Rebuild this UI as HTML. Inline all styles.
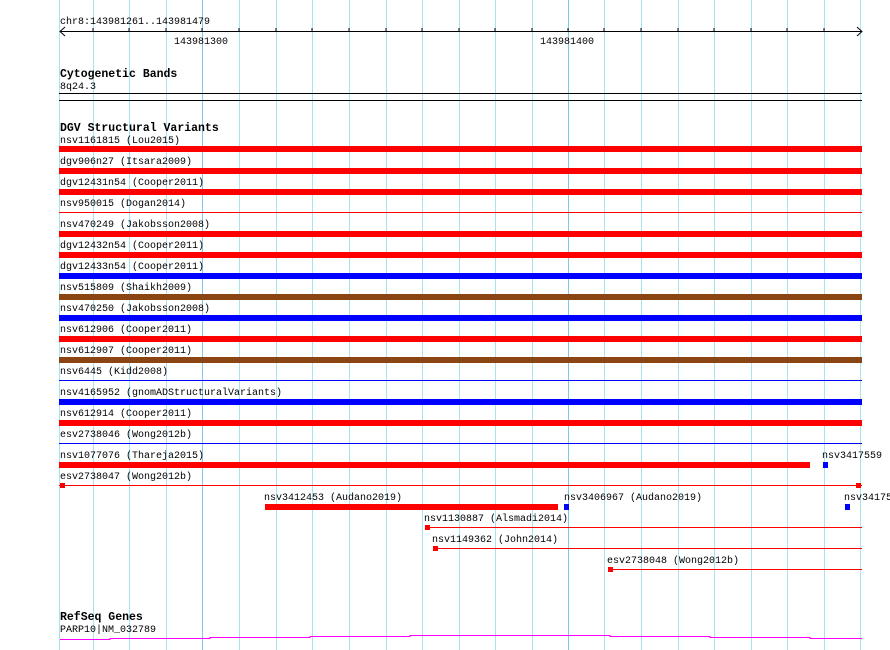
<!DOCTYPE html>
<html><head><meta charset="utf-8"><style>
body{margin:0;width:890px;height:650px;background:#fff;overflow:hidden;position:relative;font-family:"Liberation Mono",monospace;font-size:10px;color:#000}
.g{position:absolute;top:0;height:650px;width:1px;background:#a8e4f0}
.gm{background:#80c8e8}
.t{position:absolute;white-space:nowrap;line-height:12px;margin-top:2px}
.b{position:absolute;font-weight:bold;font-size:11.5px;white-space:nowrap;margin-top:2px}
.r{position:absolute}
</style></head><body>
<div class="g" style="left:59px"></div><div class="g" style="left:93px"></div><div class="g" style="left:129px"></div><div class="g" style="left:166px"></div><div class="g gm" style="left:202px"></div><div class="g" style="left:239px"></div><div class="g" style="left:276px"></div><div class="g" style="left:312px"></div><div class="g" style="left:349px"></div><div class="g" style="left:386px"></div><div class="g" style="left:422px"></div><div class="g" style="left:459px"></div><div class="g" style="left:495px"></div><div class="g" style="left:532px"></div><div class="g gm" style="left:568px"></div><div class="g" style="left:604px"></div><div class="g" style="left:641px"></div><div class="g" style="left:678px"></div><div class="g" style="left:714px"></div><div class="g" style="left:751px"></div><div class="g" style="left:787px"></div><div class="g" style="left:824px"></div><div class="g" style="left:860px"></div>

<div class="t" style="left:60px;top:15px">chr8:143981261..143981479</div>
<div class="r" style="left:60px;top:31px;width:801px;height:1px;background:#000"></div>
<svg class="r" style="left:59px;top:26px" width="804" height="12"><path d="M6 1L1 5.5L6 10M798 1L803 5.5L798 10" stroke="#000" fill="none"/>
<g stroke="#000"><path d="M34 2v4M70 2v4M107 2v4M143 2v4M180 2v4M217 2v4M253 2v4M290 2v4M327 2v4M363 2v4M400 2v4M436 2v4M473 2v4M509 2v4M545 2v4M582 2v4M619 2v4M655 2v4M692 2v4M728 2v4M765 2v4"/></g></svg>
<div class="t" style="left:174px;top:35px">143981300</div>
<div class="t" style="left:540px;top:35px">143981400</div>

<div class="b" style="left:60px;top:66px">Cytogenetic Bands</div>
<div class="t" style="left:60px;top:80px">8q24.3</div>
<div class="r" style="left:59px;top:93px;width:803px;height:1px;background:#000"></div>
<div class="r" style="left:59px;top:100px;width:803px;height:1px;background:#000"></div>

<div class="b" style="left:60px;top:120px">DGV Structural Variants</div>

<div class="t" style="left:60px;top:134px">nsv1161815 (Lou2015)</div><div class="r" style="left:59px;top:146px;width:803px;height:6px;background:#f00"></div>
<div class="t" style="left:60px;top:155px">dgv906n27 (Itsara2009)</div><div class="r" style="left:59px;top:168px;width:803px;height:6px;background:#f00"></div>
<div class="t" style="left:60px;top:176px">dgv12431n54 (Cooper2011)</div><div class="r" style="left:59px;top:189px;width:803px;height:6px;background:#f00"></div>
<div class="t" style="left:60px;top:197px">nsv950015 (Dogan2014)</div><div class="r" style="left:59px;top:212px;width:803px;height:1px;background:#f00"></div>
<div class="t" style="left:60px;top:218px">nsv470249 (Jakobsson2008)</div><div class="r" style="left:59px;top:231px;width:803px;height:6px;background:#f00"></div>
<div class="t" style="left:60px;top:239px">dgv12432n54 (Cooper2011)</div><div class="r" style="left:59px;top:252px;width:803px;height:6px;background:#f00"></div>
<div class="t" style="left:60px;top:260px">dgv12433n54 (Cooper2011)</div><div class="r" style="left:59px;top:273px;width:803px;height:6px;background:#00f"></div>
<div class="t" style="left:60px;top:281px">nsv515809 (Shaikh2009)</div><div class="r" style="left:59px;top:294px;width:803px;height:6px;background:#8b4513"></div>
<div class="t" style="left:60px;top:302px">nsv470250 (Jakobsson2008)</div><div class="r" style="left:59px;top:315px;width:803px;height:6px;background:#00f"></div>
<div class="t" style="left:60px;top:323px">nsv612906 (Cooper2011)</div><div class="r" style="left:59px;top:336px;width:803px;height:6px;background:#f00"></div>
<div class="t" style="left:60px;top:344px">nsv612907 (Cooper2011)</div><div class="r" style="left:59px;top:357px;width:803px;height:6px;background:#8b4513"></div>
<div class="t" style="left:60px;top:365px">nsv6445 (Kidd2008)</div><div class="r" style="left:59px;top:380px;width:803px;height:1px;background:#00f"></div>
<div class="t" style="left:60px;top:386px">nsv4165952 (gnomADStructuralVariants)</div><div class="r" style="left:59px;top:399px;width:803px;height:6px;background:#00f"></div>
<div class="t" style="left:60px;top:407px">nsv612914 (Cooper2011)</div><div class="r" style="left:59px;top:420px;width:803px;height:6px;background:#f00"></div>
<div class="t" style="left:60px;top:428px">esv2738046 (Wong2012b)</div><div class="r" style="left:59px;top:443px;width:803px;height:1px;background:#00f"></div>
<div class="t" style="left:60px;top:449px">nsv1077076 (Thareja2015)</div><div class="r" style="left:59px;top:462px;width:751px;height:6px;background:#f00"></div>
<div class="t" style="left:822px;top:449px">nsv3417559</div><div class="r" style="left:823px;top:462px;width:5px;height:6px;background:#00f"></div>
<div class="t" style="left:60px;top:470px">esv2738047 (Wong2012b)</div><div class="r" style="left:59px;top:485px;width:803px;height:1px;background:#f00"></div>
<div class="r" style="left:60px;top:483px;width:5px;height:5px;background:#f00"></div><div class="r" style="left:856px;top:483px;width:5px;height:5px;background:#f00"></div>

<div class="t" style="left:264px;top:491px">nsv3412453 (Audano2019)</div><div class="r" style="left:265px;top:504px;width:293px;height:6px;background:#f00"></div>
<div class="t" style="left:564px;top:491px">nsv3406967 (Audano2019)</div><div class="r" style="left:564px;top:504px;width:5px;height:6px;background:#00f"></div>
<div class="t" style="left:844px;top:491px">nsv34175</div><div class="r" style="left:845px;top:504px;width:5px;height:6px;background:#00f"></div>

<div class="t" style="left:424px;top:512px">nsv1130887 (Alsmadi2014)</div><div class="r" style="left:425px;top:527px;width:437px;height:1px;background:#f00"></div><div class="r" style="left:425px;top:525px;width:5px;height:5px;background:#f00"></div>
<div class="t" style="left:432px;top:533px">nsv1149362 (John2014)</div><div class="r" style="left:433px;top:548px;width:429px;height:1px;background:#f00"></div><div class="r" style="left:433px;top:546px;width:5px;height:5px;background:#f00"></div>
<div class="t" style="left:607px;top:554px">esv2738048 (Wong2012b)</div><div class="r" style="left:608px;top:569px;width:254px;height:1px;background:#f00"></div><div class="r" style="left:608px;top:567px;width:5px;height:5px;background:#f00"></div>

<div class="b" style="left:60px;top:609px">RefSeq Genes</div>
<div class="t" style="left:60px;top:623px">PARP10|NM_032789</div>
<svg class="r" style="left:59px;top:630px" width="804" height="12"><path d="M1 9.5H51V8.5H151V7.5H251V6.5H351V5.5H451V5.5H551V6.5H651V7.5H751V8.5H803" stroke="#f0f" fill="none"/></svg>
</body></html>
